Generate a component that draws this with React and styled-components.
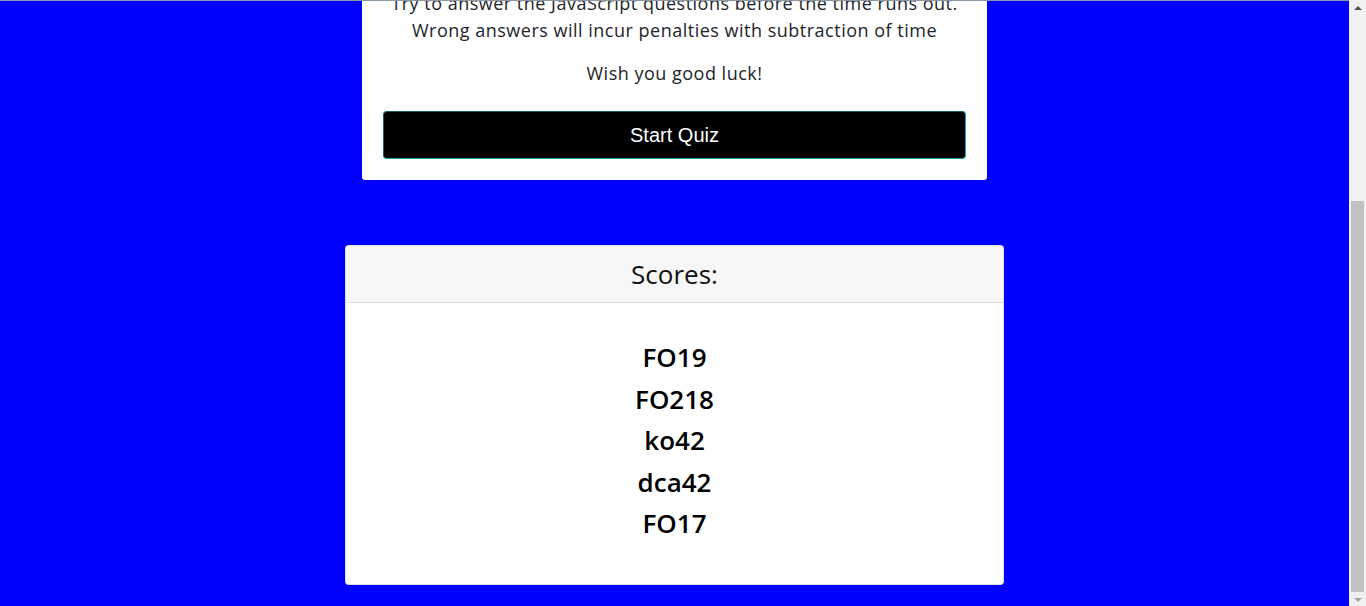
import React, { useLayoutEffect, useRef } from "react";
import styled, { createGlobalStyle } from "styled-components";

const GlobalStyle = createGlobalStyle`
  html, body {
    margin: 0;
    height: 100%;
    overflow: hidden;
  }
  #root {
    height: 100%;
  }
`;

const Frame = styled.div`
  display: flex;
  height: 100vh;
  background: #0000ff;
`;

const Viewport = styled.div`
  flex: 1;
  min-width: 0;
  border-top: 1px solid #8b97a4;
  overflow: hidden;
  font-family: "Open Sans", "Noto Sans", sans-serif;
  color: #212529;
`;

// window scrollbar, drawn by hand (scrolled to the very bottom)
const ScrollBar = styled.div`
  display: flex;
  flex-direction: column;
  width: 17px;
  flex-shrink: 0;
  background: #f1f1f1;
`;

const ArrowButton = styled.div`
  display: flex;
  align-items: center;
  justify-content: center;
  height: ${({ $size }) => $size}px;
  flex-shrink: 0;

  &::before {
    content: "";
    border-left: 4px solid transparent;
    border-right: 4px solid transparent;
    ${({ $dir, $color }) =>
      $dir === "up"
        ? `border-bottom: 4px solid ${$color}; margin-top: -2px;`
        : `border-top: 4px solid ${$color}; margin-top: 1px;`}
  }
`;

const Track = styled.div`
  flex: 1;
  display: flex;
  flex-direction: column;
  justify-content: flex-end;
`;

const Thumb = styled.div`
  height: 391px;
  margin: 0 2px;
  background: #c1c1c1;
`;

const Page = styled.main`
  display: flex;
  flex-direction: column;
  align-items: center;
  gap: 65px;
  padding: 120px 0 21px;
`;

const IntroCard = styled.section`
  width: 625px;
  box-sizing: border-box;
  padding: 20px 21px 21px;
  background: #fff;
  border-radius: 3px;
  text-align: center;
`;

const Title = styled.h1`
  margin: 0 0 16px;
  font-size: 40px;
  line-height: 48px;
  font-weight: 500;
`;

const Text = styled.p`
  margin: 0 0 16px;
  font-size: 18px;
  line-height: 27px;
  letter-spacing: 0.5px;
  font-weight: 400;
`;

const StartButton = styled.button`
  display: block;
  width: 100%;
  margin-top: 24px;
  padding: 8px 12px;
  font-family: "Liberation Sans", Arial, sans-serif;
  font-size: 20px;
  line-height: 30px;
  color: #fff;
  background: #000;
  border: 1px solid #17a2b8;
  border-top-color: #1f5f68;
  border-left-color: #1f5f68;
  border-radius: 4px;
  cursor: pointer;
`;

const ScoreCard = styled.section`
  width: 659px;
  box-sizing: border-box;
  background: #fff;
  border: 1px solid rgba(0, 0, 0, 0.125);
  border-radius: 4px;
  overflow: hidden;
  text-align: center;
`;

const ScoreHeader = styled.header`
  padding: 12px 20px;
  background: #f7f7f7;
  border-bottom: 1px solid #dcdcdc;
  font-size: 26px;
  line-height: 32px;
  color: #111;
`;

const ScoreList = styled.ol`
  list-style: none;
  margin: 0;
  padding: 38px 20px 35px;
`;

const ScoreItem = styled.li`
  margin-bottom: 8px;
  font-size: 26px;
  line-height: 33.6px;
  font-weight: 600;
  color: #000;
`;

const scores = ["FO19", "FO218", "ko42", "dca42", "FO17"];

export default function App() {
  const viewRef = useRef(null);

  useLayoutEffect(() => {
    const el = viewRef.current;
    if (el) el.scrollTop = el.scrollHeight;
  }, []);

  return (
    <>
      <GlobalStyle />
      <Frame>
        <Viewport ref={viewRef}>
          <Page>
            <IntroCard>
              <Title>Coding Quiz Challenge</Title>
              <Text>
                Try to answer the JavaScript questions before the time runs out.
                <br />
                Wrong answers will incur penalties with subtraction of time
              </Text>
              <Text>Wish you good luck!</Text>
              <StartButton type="button">Start Quiz</StartButton>
            </IntroCard>

            <ScoreCard>
              <ScoreHeader>Scores:</ScoreHeader>
              <ScoreList>
                {scores.map((name) => (
                  <ScoreItem key={name}>{name}</ScoreItem>
                ))}
              </ScoreList>
            </ScoreCard>
          </Page>
        </Viewport>

        <ScrollBar>
          <ArrowButton $size={17} $dir="up" $color="#505050" />
          <Track>
            <Thumb />
          </Track>
          <ArrowButton $size={14} $dir="down" $color="#a3a3a3" />
        </ScrollBar>
      </Frame>
    </>
  );
}
